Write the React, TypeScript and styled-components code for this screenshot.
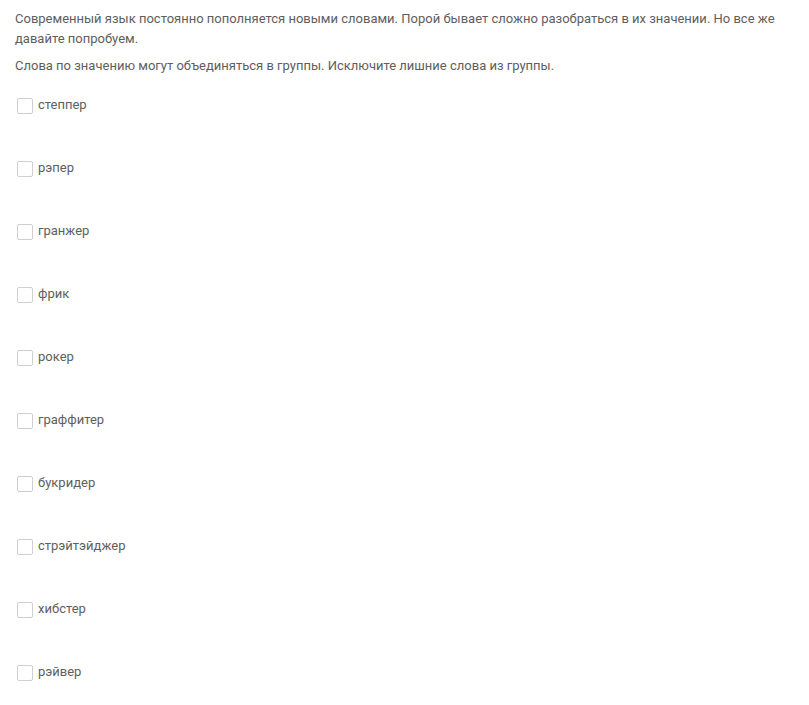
import React from 'react';
import styled, { createGlobalStyle } from 'styled-components';

const words = [
  'степпер',
  'рэпер',
  'гранжер',
  'фрик',
  'рокер',
  'граффитер',
  'букридер',
  'стрэйтэйджер',
  'хибстер',
  'рэйвер',
];

const GlobalStyle = createGlobalStyle`
  body {
    margin: 0;
    background: #ffffff;
    font-family: Roboto, "Noto Sans", sans-serif;
  }
`;

const App = () => (
  <Page>
    <GlobalStyle />
    <Paragraph>
      Современный язык постоянно пополняется новыми словами. Порой бывает сложно разобраться в их значении. Но все же давайте попробуем.
    </Paragraph>
    <Paragraph>Слова по значению могут объединяться в группы. Исключите лишние слова из группы.</Paragraph>
    <List>
      {words.map((w) => (
        <Item key={w}>
          <Box type="checkbox" />
          <Label>{w}</Label>
        </Item>
      ))}
    </List>
  </Page>
);

export default App;

const Page = styled.div`
  padding: 9px 15px 0 15px;
  width: 779px;
  color: #5e5e5e;
  font-size: 13px;
  line-height: 20px;
`;

const Paragraph = styled.p`
  margin: 0 0 7px 0;
`;

const List = styled.div`
  display: flex;
  flex-direction: column;
  gap: 43px;
  margin-top: 19px;
  padding-left: 2px;
`;

const Item = styled.label`
  display: flex;
  align-items: center;
  height: 20px;
`;

const Box = styled.input`
  appearance: none;
  margin: 2px 5px 0 0;
  width: 16px;
  height: 16px;
  border: 1px solid #cfcfcf;
  border-radius: 2px;
  background: #fff;
  box-sizing: border-box;
`;

const Label = styled.span`
  color: #5e5e5e;
`;
